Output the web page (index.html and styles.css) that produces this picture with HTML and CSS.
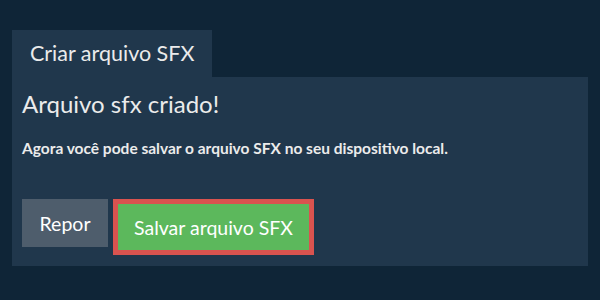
FILE: index.html
```html
<!DOCTYPE html>
<html lang="pt">
<head>
<meta charset="utf-8">
<link rel="stylesheet" href="styles.css">
</head>
<body>
<div class="wrap">
  <div class="tabs"><div class="tab">Criar arquivo SFX</div></div>
  <div class="panel">
    <h1 class="title">Arquivo sfx criado!</h1>
    <p class="msg">Agora você pode salvar o arquivo SFX no seu dispositivo local.</p>
    <div class="actions">
      <button class="btn btn-reset">Repor</button>
      <button class="btn btn-save">Salvar arquivo SFX</button>
    </div>
  </div>
</div>
</body>
</html>
```
FILE: styles.css
```css
html, body { margin: 0; padding: 0; }
body {
  width: 600px; height: 300px;
  background: #0f2537;
  font-family: Lato, "Open Sans", sans-serif;
  color: #ebebeb;
  overflow: hidden;
}
.wrap { padding: 30px 12px 0 12px; }
.tabs { display: flex; }
.tab {
  width: 200px; height: 47px; box-sizing: border-box;
  background: #20374c;
  font-size: 21.5px; line-height: 46px;
  padding-left: 18px;
}
.panel {
  background: #20374c;
  height: 189px; box-sizing: border-box;
  padding: 12px 10px 0 10px;
}
.title { margin: 0; font-weight: 400; font-size: 24px; line-height: 30px; }
.msg { margin: 19px 0 0 0; font-weight: 700; font-size: 15.5px; line-height: 20px; }
.actions { display: flex; align-items: flex-start; gap: 5px; margin-top: 41px; }
.btn {
  font-family: inherit; color: #fff; border: 0; padding: 0;
  font-size: 19.5px; cursor: pointer;
}
.btn-reset { background: #4e5d6c; width: 86px; height: 48px; }
.btn-save {
  background: #5cb85c; width: 201px; height: 56px;
  border: 5px solid #d9534f; box-sizing: border-box;
}
```
